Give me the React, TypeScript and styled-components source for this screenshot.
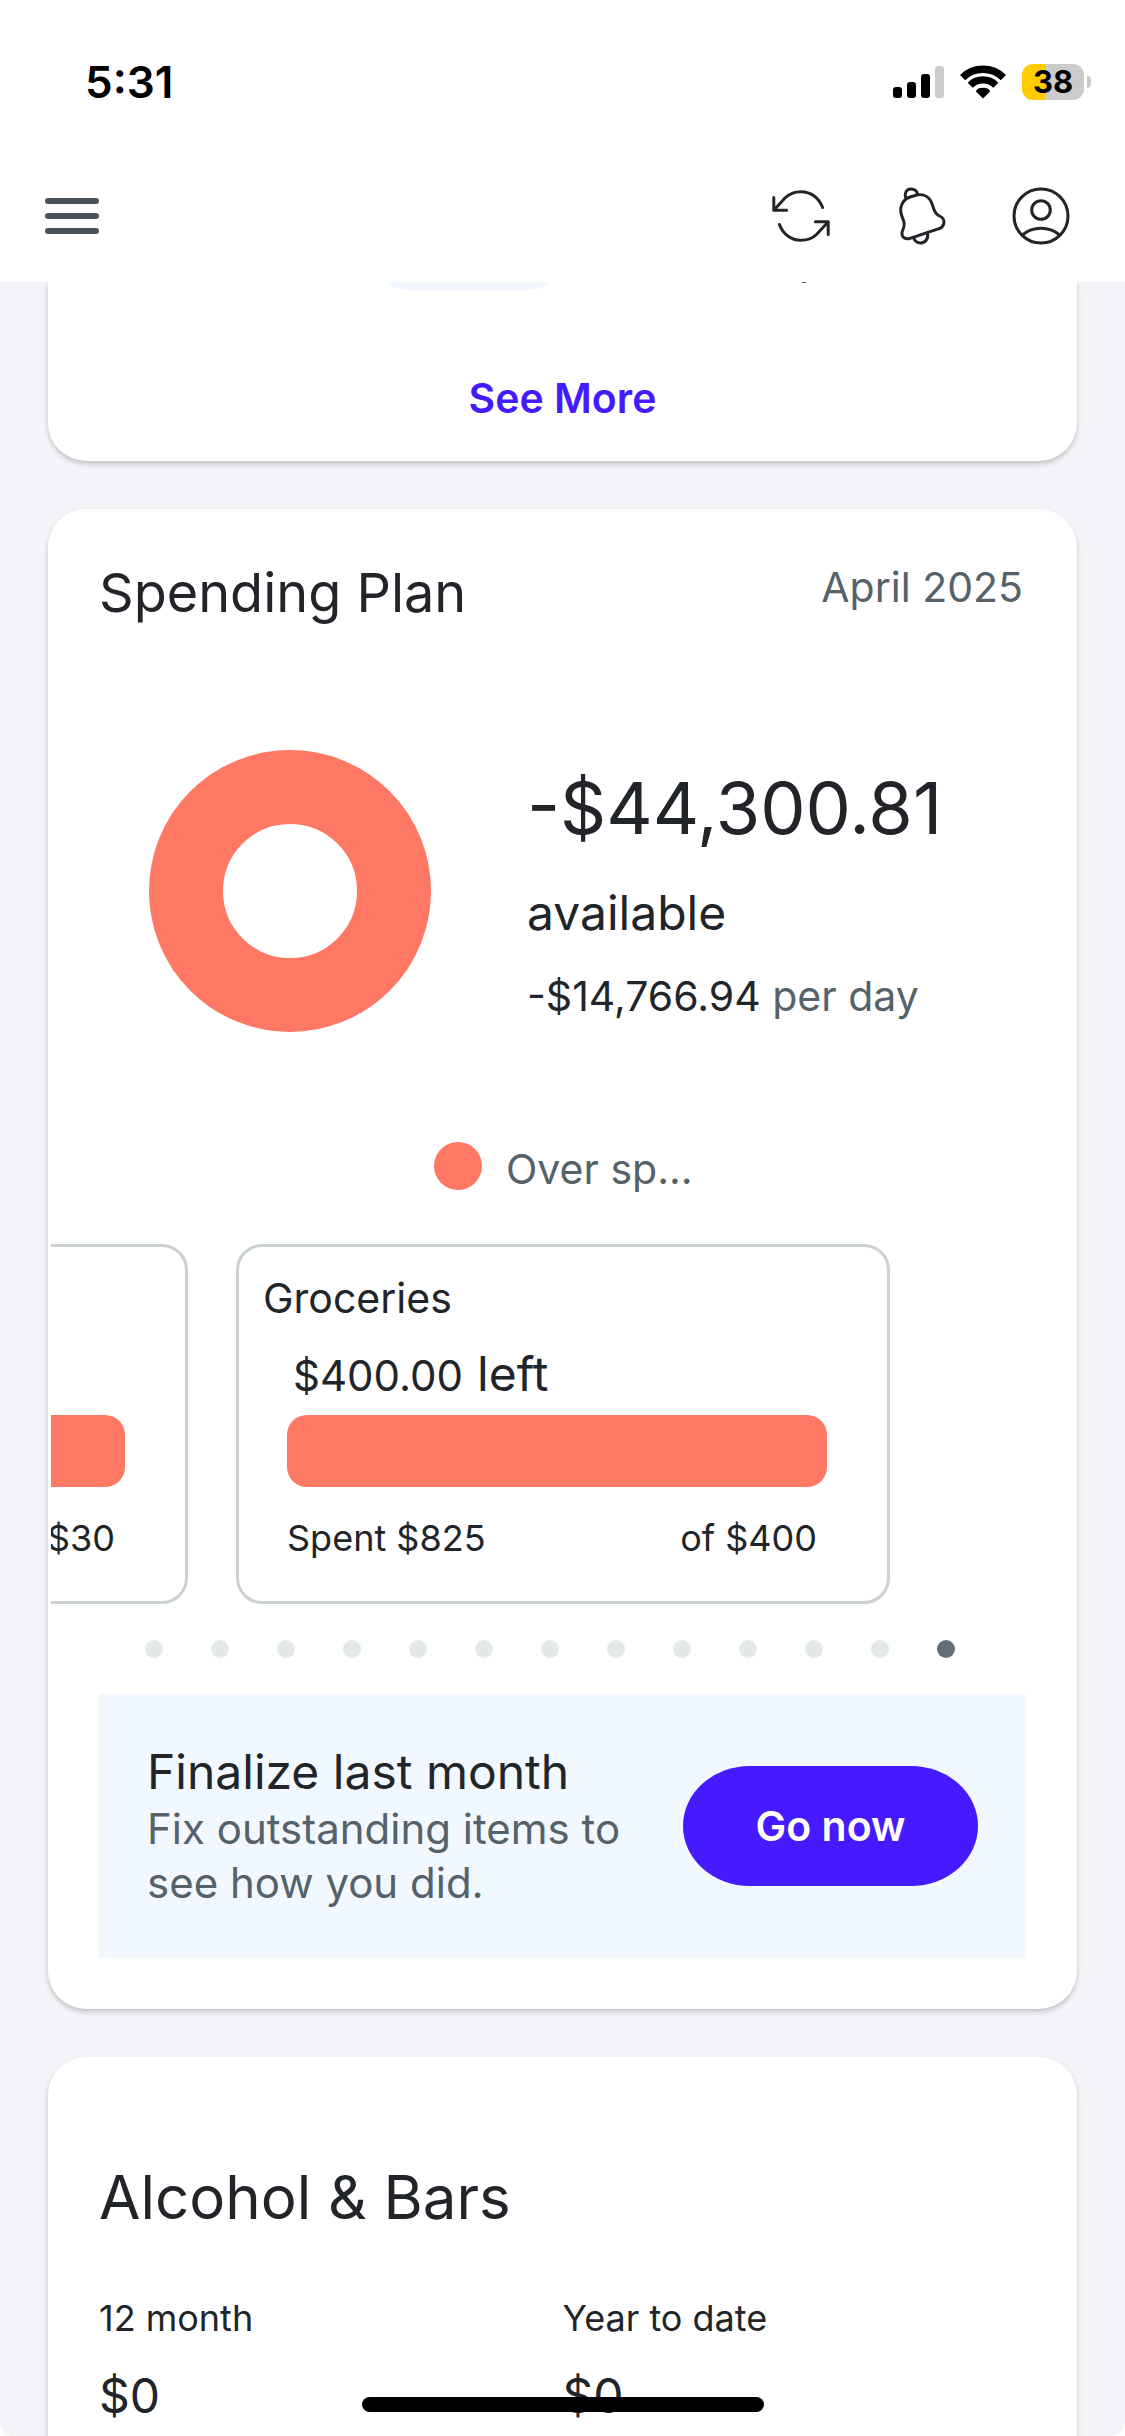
import React from "react";
import styled, { createGlobalStyle } from "styled-components";

const color = {
  ink: "#212529",
  muted: "#55626a",
  coral: "#ff7864",
  violet: "#451aff",
  page: "#f3f4f7",
  tint: "#f2f8ff",
  line: "#c9d1d3",
};

const Global = createGlobalStyle`
  *, *::before, *::after { box-sizing: border-box; }
  body { margin: 0; background: #fff; }
  button { border: 0; padding: 0; background: none; font: inherit; color: inherit; cursor: pointer; }
  h1, h2, h3, p, ul { margin: 0; padding: 0; font-weight: 400; }
`;

const Shell = styled.div`
  display: flex;
  flex-direction: column;
  height: 100vh;
  overflow: hidden;
  border-radius: 0 0 14px 14px;
  background: ${color.page};
  color: ${color.ink};
  font-family: Inter, "Liberation Sans", sans-serif;
`;

const Header = styled.header`
  flex: none;
  background: #fff;
`;

const StatusBar = styled.div`
  display: flex;
  align-items: center;
  justify-content: space-between;
  padding: 56px 34px 42px 85px;
  color: #000;
`;

const Clock = styled.time`
  font-size: 44px;
  line-height: 52px;
  font-weight: 600;
`;

const StatusIcons = styled.div`
  display: flex;
  align-items: center;
  gap: 16px;
`;

const Battery = styled.div`
  display: flex;
  align-items: center;
  gap: 3px;
  &::after {
    content: "";
    width: 4px;
    height: 12px;
    border-radius: 0 6px 6px 0;
    background: #cbcbcd;
  }
`;

const BatteryLevel = styled.div<{ $level: number }>`
  width: 62px;
  border-radius: 11px;
  background: linear-gradient(to right, #ffcc00 ${(p) => p.$level}%, #cbcbcd ${(p) => p.$level}%);
  font-size: 31px;
  line-height: 36px;
  font-weight: 700;
  text-align: center;
`;

const Toolbar = styled.nav`
  display: flex;
  align-items: center;
  justify-content: space-between;
  height: 132px;
  padding: 0 54px 0 45px;
`;

const MenuButton = styled.button`
  display: grid;
  gap: 9px;
  width: 54px;
`;

const MenuLine = styled.span`
  height: 6px;
  border-radius: 3px;
  background: #485058;
`;

const Actions = styled.div`
  display: flex;
  gap: 60px;
`;

const IconButton = styled.button`
  width: 60px;
  height: 60px;
  svg {
    display: block;
    fill: none;
    stroke: ${color.ink};
    stroke-width: 3;
    stroke-linecap: round;
    stroke-linejoin: round;
  }
`;

const Feed = styled.main`
  flex: 1;
  min-height: 0;
  overflow: hidden;
  display: flex;
  flex-direction: column;
  gap: 48px;
  padding: 0 48px;
`;

const Card = styled.section<{ $continued?: boolean }>`
  flex: none;
  padding: ${(p) => (p.$continued ? "0 51px 36px" : "0 51px 51px")};
  border-radius: ${(p) => (p.$continued ? "0 0 38px 38px" : "38px")};
  background: #fff;
  box-shadow: 0 3px 5px rgba(0, 0, 0, 0.2);
`;

const Remnants = styled.div`
  display: flex;
  height: 8px;
  padding-left: 290px;
  gap: 253px;
`;

const PillEnd = styled.span`
  width: 160px;
  height: 8px;
  border-radius: 0 0 24px 24px / 0 0 8px 8px;
  background: #f0f7ff;
`;

const TextTail = styled.span`
  width: 4px;
  height: 1px;
  background: ${color.muted};
`;

const SeeMore = styled.button`
  display: block;
  margin: 81px auto 0;
  color: ${color.violet};
  font-size: 41px;
  line-height: 54px;
  font-weight: 600;
`;

const CardHead = styled.div`
  display: flex;
  align-items: flex-start;
  justify-content: space-between;
  padding: 51px 3px 0 0;
`;

const Title = styled.h2`
  font-size: 54px;
  line-height: 66px;
`;

const Period = styled.span`
  color: ${color.muted};
  font-size: 41px;
  line-height: 54px;
`;

const Summary = styled.div`
  display: flex;
  gap: 96px;
  margin-top: 124px;
  padding-left: 50px;
`;

const Donut = styled.div`
  flex: none;
  width: 282px;
  height: 282px;
  border: 74px solid ${color.coral};
  border-radius: 50%;
`;

const Figures = styled.div`
  padding-top: 16px;
`;

const Amount = styled.p`
  font-size: 72px;
  line-height: 84px;
`;

const Available = styled.p`
  margin-top: 33px;
  font-size: 48px;
  line-height: 60px;
`;

const PerDay = styled.p`
  margin-top: 26px;
  font-size: 41px;
  line-height: 54px;
  span {
    color: ${color.muted};
  }
`;

const Legend = styled.div`
  display: flex;
  justify-content: center;
  gap: 24px;
  margin-top: 110px;
  color: ${color.muted};
  font-size: 41px;
  line-height: 54px;
  &::before {
    content: "";
    width: 48px;
    height: 48px;
    border-radius: 50%;
    background: ${color.coral};
  }
`;

const LegendText = styled.span`
  width: 185px;
  white-space: nowrap;
`;

const Carousel = styled.div`
  display: flex;
  justify-content: flex-end;
  gap: 48px;
  margin: 48px -48px 0;
  padding-right: 184px;
  overflow: hidden;
`;

const Category = styled.article`
  flex: none;
  display: flex;
  flex-direction: column;
  width: 654px;
  height: 360px;
  padding: 24px 60px 42px 48px;
  border: 3px solid ${color.line};
  border-radius: 26px;
`;

const CategoryName = styled.h3`
  margin-left: -24px;
  font-size: 41px;
  line-height: 54px;
`;

const CategoryLeft = styled.p`
  display: flex;
  align-items: baseline;
  gap: 14px;
  margin: 19px 0 11px;
  padding-left: 6px;
  font-size: 48px;
  line-height: 60px;
  span {
    font-size: 42px;
    line-height: 42px;
  }
`;

const Bar = styled.div`
  flex: none;
  height: 72px;
  margin-top: auto;
  border-radius: 20px;
  background: ${color.coral};
`;

const CategoryTotals = styled.div`
  display: flex;
  justify-content: space-between;
  margin-top: 30px;
  padding-right: 10px;
  font-size: 36px;
  line-height: 42px;
`;

const Dots = styled.div`
  display: flex;
  justify-content: center;
  gap: 48px;
  margin: 36px 0;
  padding-right: 26px;
`;

const Dot = styled.button<{ $active: boolean }>`
  width: 18px;
  height: 18px;
  border-radius: 50%;
  background: ${(p) => (p.$active ? "#606f7b" : "#e3e8e9")};
`;

const Notice = styled.div`
  display: flex;
  align-items: center;
  justify-content: space-between;
  padding: 48px;
  background: ${color.tint};
`;

const NoticeTitle = styled.h3`
  font-size: 48px;
  line-height: 60px;
`;

const NoticeText = styled.p`
  color: ${color.muted};
  font-size: 42px;
  line-height: 54px;
`;

const GoButton = styled.button`
  flex: none;
  width: 295px;
  height: 120px;
  border-radius: 67px / 60px;
  background: ${color.violet};
  color: #fff;
  font-size: 41px;
  font-weight: 600;
`;

const CategoryTitle = styled.h2`
  padding-top: 104px;
  font-size: 60px;
  line-height: 72px;
`;

const Stats = styled.div`
  display: grid;
  grid-template-columns: 1fr 1fr;
  margin-top: 64px;
`;

const StatLabel = styled.p`
  font-size: 36px;
  line-height: 42px;
`;

const StatValue = styled.p`
  margin-top: 27px;
  font-size: 48px;
  line-height: 60px;
`;

const HomeIndicator = styled.div`
  position: fixed;
  bottom: 24px;
  left: 50%;
  width: 402px;
  height: 15px;
  margin-left: -201px;
  border-radius: 8px;
  background: #000;
`;

const Signal = () => (
  <svg width="51" height="34" viewBox="0 0 51 34" aria-hidden="true">
    <rect x="0" y="22" width="9" height="11" rx="3" />
    <rect x="14" y="17" width="9" height="16" rx="3" />
    <rect x="28" y="9" width="9" height="24" rx="3" />
    <rect x="42" y="1" width="9" height="32" rx="3" fill="#cbcbcd" />
  </svg>
);

const Wifi = () => (
  <svg width="46" height="34" viewBox="0 0 46 34" aria-hidden="true">
    <path d="M2.6 12.6A29.2 29.2 0 0 1 43.4 12.6" fill="none" stroke="#000" strokeWidth="7.4" />
    <path d="M10.2 20.2A18.2 18.2 0 0 1 35.8 20.2" fill="none" stroke="#000" strokeWidth="7.2" />
    <path d="M23 33.5L16 26.6Q16.500 22.800 23 22.800Q29.500 22.800 30 26.600Z" />
  </svg>
);

const SyncIcon = () => (
  <svg width="60" height="60" viewBox="0 0 60 60" aria-hidden="true">
    <path d="M3 24L14 12C18 8 24 5.700 30 5.700C40 5.700 48 12 51.600 21.500" />
    <path d="M2.800 11.500V24.300H15.600" />
    <path d="M57 36L46 48C42 52 36 54.300 30 54.300C20 54.300 12 48 8.400 38.500" />
    <path d="M57.200 48.500V35.700H44.400" />
  </svg>
);

const BellIcon = () => (
  <svg width="60" height="60" viewBox="0 0 60 60" aria-hidden="true">
    <path d="M14.900 12C13.100 7 15.500 3 19.900 3C23.500 3 26 5 26.800 8.600" />
    <path d="M26.800 8.800C33.500 7.800 39 11.600 41.300 18.500C42.800 23 43 27.500 48.500 30C52 31.500 53.500 34.500 52.800 37.500C52 40.500 51 41.800 48 42.700L19 52.400C14.500 53.800 10.300 51.300 11 46.500C11.500 43.500 13.900 41 13.100 36.500C12.300 32.500 8.800 28 9.800 22C10.700 16.500 14 12.700 19 11Z" />
    <path d="M22.300 51.500C24 55.500 27 57.300 30.300 57C35 56.300 37.800 52 36.300 47" />
  </svg>
);

const UserIcon = () => (
  <svg width="60" height="60" viewBox="0 0 60 60" aria-hidden="true">
    <circle cx="30" cy="30" r="27" />
    <circle cx="30" cy="24" r="9.300" />
    <path d="M11.500 49C22 40 38 40 48.500 49" />
  </svg>
);

interface CategoryCardProps {
  name?: string;
  left?: string;
  spent?: string;
  budget: string;
}

const CategoryCard = ({ name, left, spent, budget }: CategoryCardProps) => (
  <Category>
    {name && <CategoryName>{name}</CategoryName>}
    {left && (
      <CategoryLeft>
        <span>{left}</span> left
      </CategoryLeft>
    )}
    <Bar />
    <CategoryTotals>
      <span>{spent}</span>
      <span>of {budget}</span>
    </CategoryTotals>
  </Category>
);

const stats = [
  { label: "12 month", value: "$0" },
  { label: "Year to date", value: "$0" },
];

const PAGES = 13;
const CURRENT = 12;

export default function App() {
  return (
    <Shell>
      <Global />
      <Header>
        <StatusBar>
          <Clock>5:31</Clock>
          <StatusIcons>
            <Signal />
            <Wifi />
            <Battery>
              <BatteryLevel $level={38}>38</BatteryLevel>
            </Battery>
          </StatusIcons>
        </StatusBar>
        <Toolbar>
          <MenuButton aria-label="Menu">
            <MenuLine />
            <MenuLine />
            <MenuLine />
          </MenuButton>
          <Actions>
            <IconButton aria-label="Refresh">
              <SyncIcon />
            </IconButton>
            <IconButton aria-label="Notifications">
              <BellIcon />
            </IconButton>
            <IconButton aria-label="Account">
              <UserIcon />
            </IconButton>
          </Actions>
        </Toolbar>
      </Header>

      <Feed>
        <Card $continued>
          <Remnants>
            <PillEnd />
            <TextTail />
          </Remnants>
          <SeeMore>See More</SeeMore>
        </Card>

        <Card>
          <CardHead>
            <Title>Spending Plan</Title>
            <Period>April 2025</Period>
          </CardHead>
          <Summary>
            <Donut />
            <Figures>
              <Amount>-$44,300.81</Amount>
              <Available>available</Available>
              <PerDay>
                -$14,766.94 <span>per day</span>
              </PerDay>
            </Figures>
          </Summary>
          <Legend>
            <LegendText>Over sp...</LegendText>
          </Legend>
          <Carousel>
            <CategoryCard budget="$30" />
            <CategoryCard name="Groceries" left="$400.00" spent="Spent $825" budget="$400" />
          </Carousel>
          <Dots>
            {Array.from({ length: PAGES }, (_, i) => (
              <Dot key={i} $active={i === CURRENT} aria-label={`Page ${i + 1}`} />
            ))}
          </Dots>
          <Notice>
            <div>
              <NoticeTitle>Finalize last month</NoticeTitle>
              <NoticeText>
                Fix outstanding items to
                <br />
                see how you did.
              </NoticeText>
            </div>
            <GoButton>Go now</GoButton>
          </Notice>
        </Card>

        <Card>
          <CategoryTitle>Alcohol &amp; Bars</CategoryTitle>
          <Stats>
            {stats.map((s) => (
              <div key={s.label}>
                <StatLabel>{s.label}</StatLabel>
                <StatValue>{s.value}</StatValue>
              </div>
            ))}
          </Stats>
        </Card>
      </Feed>
      <HomeIndicator />
    </Shell>
  );
}
